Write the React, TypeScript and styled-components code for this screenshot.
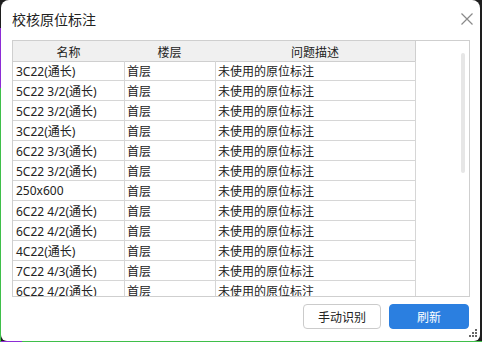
import React from "react";
import styled, { createGlobalStyle } from "styled-components";

const GlobalStyle = createGlobalStyle`
  html, body {
    margin: 0;
    padding: 0;
    width: 482px;
    height: 342px;
    overflow: hidden;
  }
  body {
    font-family: "Noto Sans", "Noto Sans CJK SC", sans-serif;
    background:
      linear-gradient(to bottom, #1e1e1e 0, #1e1e1e 28px, #8e2bd6 28px, #8e2bd6 88px, #3fbf4a 88px) left top / 1px 100% no-repeat,
      linear-gradient(to right, #8e2bd6 0, #8e2bd6 22px, #3fbf4a 22px) left bottom / 100% 1px no-repeat,
      #1e1e1e;
  }
`;

type Row = { name: string; floor: string; desc: string };

const rows: Row[] = [
  { name: "3C22(通长)", floor: "首层", desc: "未使用的原位标注" },
  { name: "5C22 3/2(通长)", floor: "首层", desc: "未使用的原位标注" },
  { name: "5C22 3/2(通长)", floor: "首层", desc: "未使用的原位标注" },
  { name: "3C22(通长)", floor: "首层", desc: "未使用的原位标注" },
  { name: "6C22 3/3(通长)", floor: "首层", desc: "未使用的原位标注" },
  { name: "5C22 3/2(通长)", floor: "首层", desc: "未使用的原位标注" },
  { name: "250x600", floor: "首层", desc: "未使用的原位标注" },
  { name: "6C22 4/2(通长)", floor: "首层", desc: "未使用的原位标注" },
  { name: "6C22 4/2(通长)", floor: "首层", desc: "未使用的原位标注" },
  { name: "4C22(通长)", floor: "首层", desc: "未使用的原位标注" },
  { name: "7C22 4/3(通长)", floor: "首层", desc: "未使用的原位标注" },
  { name: "6C22 4/2(通长)", floor: "首层", desc: "未使用的原位标注" },
];

export default function App() {
  return (
    <>
      <GlobalStyle />
      <Dialog>
        <TitleBar>
          <Title>校核原位标注</Title>
          <CloseButton aria-label="close">
            <svg width="12" height="12" viewBox="0 0 12 12">
              <path d="M0.5 0.5 L11.5 11.5 M11.5 0.5 L0.5 11.5" stroke="#8a8a8a" strokeWidth="1.2" fill="none" />
            </svg>
          </CloseButton>
        </TitleBar>

        <TableBox>
          <Grid>
            <HeadCell>名称</HeadCell>
            <HeadCell>楼层</HeadCell>
            <HeadCell $last>问题描述</HeadCell>
            {rows.map((r, i) => (
              <React.Fragment key={i}>
                <Cell>{r.name}</Cell>
                <Cell>{r.floor}</Cell>
                <Cell $last>{r.desc}</Cell>
              </React.Fragment>
            ))}
          </Grid>
          <ScrollTrack>
            <ScrollThumb />
          </ScrollTrack>
        </TableBox>

        <Footer>
          <Button>手动识别</Button>
          <Button $primary>刷新</Button>
        </Footer>
        <Grip>
          <svg width="9" height="9" viewBox="0 0 9 9">
            <rect x="6" y="0" width="2" height="2" fill="#666" />
            <rect x="3" y="3" width="2" height="2" fill="#666" />
            <rect x="6" y="3" width="2" height="2" fill="#666" />
            <rect x="0" y="6" width="2" height="2" fill="#666" />
            <rect x="3" y="6" width="2" height="2" fill="#666" />
            <rect x="6" y="6" width="2" height="2" fill="#666" />
          </svg>
        </Grip>
      </Dialog>
    </>
  );
}

const Dialog = styled.div`
  position: relative;
  margin-left: 1px;
  width: 479px;
  height: 341px;
  background: #ffffff;
  border-radius: 8px 8px 6px 6px;
  display: flex;
  flex-direction: column;
  box-sizing: border-box;
  padding: 0 11px;
`;

const TitleBar = styled.div`
  height: 40px;
  display: flex;
  align-items: center;
  justify-content: space-between;
  padding-bottom: 3px;
  box-sizing: border-box;
`;

const Title = styled.div`
  font-family: "Noto Sans CJK SC", sans-serif;
  font-size: 14px;
  color: #222;
`;

const CloseButton = styled.div`
  width: 12px;
  height: 12px;
  display: flex;
  margin-right: -4px;
  margin-top: 1px;
`;

const TableBox = styled.div`
  position: relative;
  width: 458px;
  height: 257px;
  border: 1px solid #cfcfcf;
  box-sizing: border-box;
  overflow: hidden;
`;

const Grid = styled.div`
  display: grid;
  grid-template-columns: 111px 91px 201px;
  grid-auto-rows: 20px;
  width: 403px;
`;

const HeadCell = styled.div<{ $last?: boolean }>`
  height: 20px;
  background: #f0f0f0;
  border-right: 1px solid #cfcfcf;
  border-bottom: 1px solid #cfcfcf;
  display: flex;
  align-items: center;
  justify-content: center;
  font-family: "Noto Sans CJK SC", sans-serif;
  font-size: 12px;
  color: #222;
  box-sizing: content-box;
  margin-right: ${(p) => (p.$last ? "0" : "-1px")};
`;

const Cell = styled.div<{ $last?: boolean }>`
  height: 19px;
  border-right: 1px solid #d6d6d6;
  border-bottom: 1px solid #d6d6d6;
  display: flex;
  align-items: center;
  padding-left: 3px;
  font-size: 12px;
  color: #222;
  white-space: nowrap;
  overflow: hidden;
  box-sizing: content-box;
  margin-right: ${(p) => (p.$last ? "0" : "-1px")};
`;

const ScrollTrack = styled.div`
  position: absolute;
  right: 4px;
  top: 12px;
  width: 4px;
  height: 120px;
`;

const ScrollThumb = styled.div`
  width: 100%;
  height: 100%;
  background: #e6e6e6;
  border-radius: 2px;
`;

const Footer = styled.div`
  display: flex;
  justify-content: flex-end;
  gap: 8px;
  margin-top: 7px;
`;

const Button = styled.button<{ $primary?: boolean }>`
  height: 25px;
  width: ${(p) => (p.$primary ? "80px" : "78px")};
  border-radius: 4px;
  border: 1px solid ${(p) => (p.$primary ? "#2b7fe0" : "#cbcbcb")};
  background: ${(p) => (p.$primary ? "#2b7fe0" : "#ffffff")};
  color: ${(p) => (p.$primary ? "#ffffff" : "#222")};
  font-family: "Noto Sans CJK SC", sans-serif;
  font-size: 12px;
  padding: 0;
`;

const Grip = styled.div`
  position: absolute;
  right: 2px;
  bottom: 3px;
  width: 9px;
  height: 9px;
  display: flex;
`;
